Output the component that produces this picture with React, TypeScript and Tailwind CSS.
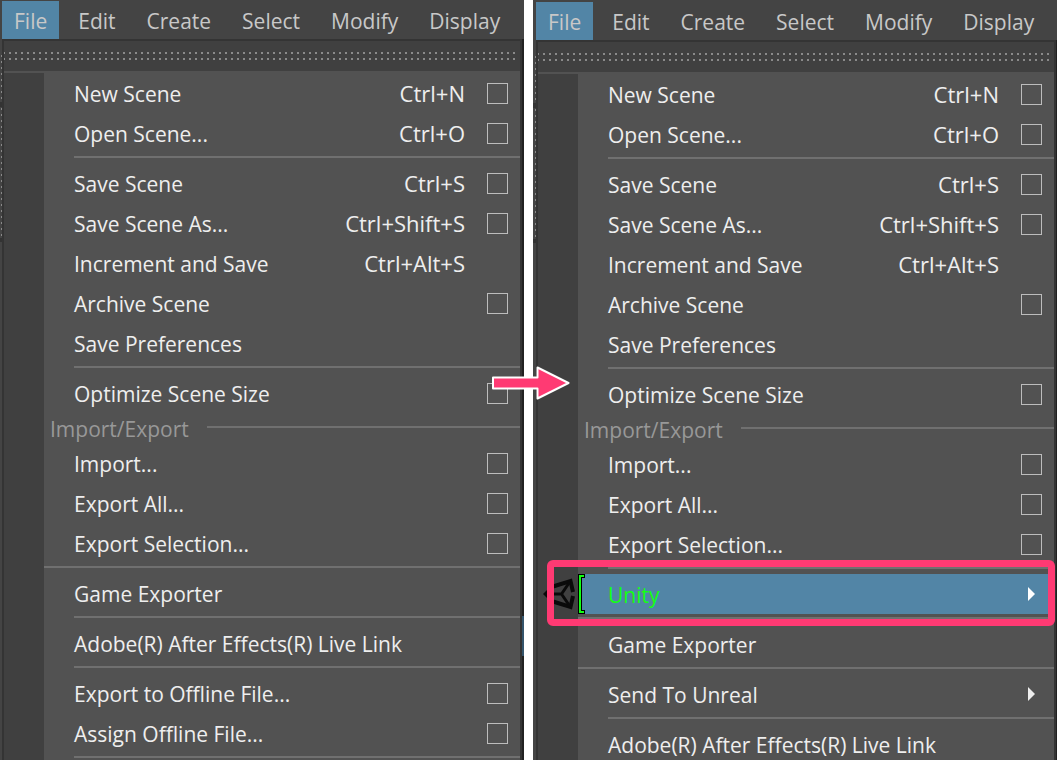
import React, { useId } from 'react';

type Entry =
  | { kind: 'item'; label: string; shortcut?: string; options?: boolean; submenu?: boolean; active?: boolean }
  | { kind: 'separator'; full?: boolean }
  | { kind: 'section'; label: string };

const menuBar = ['File', 'Edit', 'Create', 'Select', 'Modify', 'Display'];

const commonEntries: Entry[] = [
  { kind: 'item', label: 'New Scene', shortcut: 'Ctrl+N', options: true },
  { kind: 'item', label: 'Open Scene...', shortcut: 'Ctrl+O', options: true },
  { kind: 'separator' },
  { kind: 'item', label: 'Save Scene', shortcut: 'Ctrl+S', options: true },
  { kind: 'item', label: 'Save Scene As...', shortcut: 'Ctrl+Shift+S', options: true },
  { kind: 'item', label: 'Increment and Save', shortcut: 'Ctrl+Alt+S' },
  { kind: 'item', label: 'Archive Scene', options: true },
  { kind: 'item', label: 'Save Preferences' },
  { kind: 'separator' },
  { kind: 'item', label: 'Optimize Scene Size', options: true },
  { kind: 'section', label: 'Import/Export' },
  { kind: 'item', label: 'Import...', options: true },
  { kind: 'item', label: 'Export All...', options: true },
  { kind: 'item', label: 'Export Selection...', options: true },
];

const beforeEntries: Entry[] = [
  ...commonEntries,
  { kind: 'separator', full: true },
  { kind: 'item', label: 'Game Exporter' },
  { kind: 'separator' },
  { kind: 'item', label: 'Adobe(R) After Effects(R) Live Link' },
  { kind: 'separator' },
  { kind: 'item', label: 'Export to Offline File...', options: true },
  { kind: 'item', label: 'Assign Offline File...', options: true },
  { kind: 'separator' },
];

const afterEntries: Entry[] = [
  ...commonEntries,
  { kind: 'separator' },
  { kind: 'item', label: 'Unity', submenu: true, active: true },
  { kind: 'separator', full: true },
  { kind: 'item', label: 'Game Exporter' },
  { kind: 'separator', full: true },
  { kind: 'item', label: 'Send To Unreal', submenu: true },
  { kind: 'separator' },
  { kind: 'item', label: 'Adobe(R) After Effects(R) Live Link' },
];

const UnityLogo: React.FC = () => (
  <svg className="absolute left-[5px] top-[3px] h-[34px] w-8" viewBox="0 0 32 34" fill="none" stroke="#0a0a0a" strokeWidth="3">
    <path d="M10 9.500L27.500 4L30 15M30 19L27.500 30L10 24.500" strokeWidth="4" />
    <path d="M3 17H18.500L27 4.500M18.500 17L27 29.500" />
    <path d="M0 17L7 10V24Z" fill="#0a0a0a" stroke="none" />
  </svg>
);

const MenuItem: React.FC<{ entry: Extract<Entry, { kind: 'item' }> }> = ({ entry }) => {
  const id = useId();

  return (
    <li className="relative flex h-10 items-center pl-10">
      {entry.active && <UnityLogo />}
      <div className={`relative flex h-full flex-1 items-center pr-3 pl-[30px] ${entry.active ? 'bg-[#5285a6] text-[#14ff14]' : ''}`}>
        {entry.active && (
          <svg className="absolute top-0 left-0 h-10 w-[7px]" viewBox="0 0 7 40">
            <path d="M0 0H7V4H4V36H7V40H0Z" fill="#000" />
            <path d="M1 1H6V3H3V37H6V39H1Z" fill="#14ff14" />
          </svg>
        )}
        <button type="button" id={id} className="flex flex-1 items-center justify-between text-left whitespace-nowrap">
          <span className="pt-0.5">{entry.label}</span>
          {entry.shortcut && <span className="text-[22px]">{entry.shortcut}</span>}
        </button>
        <div className="flex w-[43px] justify-end">
          {entry.options && (
            <input type="checkbox" aria-labelledby={id} className="h-[21px] w-[21px] appearance-none border border-[#bdbdbd]" />
          )}
          {entry.submenu && (
            <svg className="mr-[7px] h-[14px] w-[7px]" viewBox="0 0 7 14" fill={entry.active ? '#fff' : '#eee'}>
              <path d="M0 0L7 7L0 14Z" />
            </svg>
          )}
        </div>
      </div>
      {entry.active && (
        <div className="absolute -top-[14px] -right-px left-[9px] h-[66px] rounded-md border-[7px] border-[#ff3a73]" />
      )}
    </li>
  );
};

const MenuEntry: React.FC<{ entry: Entry }> = ({ entry }) => {
  if (entry.kind === 'separator') {
    return (
      <li className={`h-[10px] pt-[3px] ${entry.full ? 'pl-10' : 'pl-[70px]'}`}>
        <div className="h-0.5 bg-[#707070]" />
      </li>
    );
  }
  if (entry.kind === 'section') {
    return (
      <li className="flex h-[30px] items-center gap-[18px] pl-[46px] text-[#989898]">
        <span className="pt-0.5">{entry.label}</span>
        <div className="mb-0.5 h-0.5 flex-1 bg-[#707070]" />
      </li>
    );
  }
  return <MenuItem entry={entry} />;
};

interface MenuWindowProps {
  entries: Entry[];
  shifted?: boolean;
}

const MenuWindow: React.FC<MenuWindowProps> = ({ entries, shifted }) => (
  <section className={`flex min-w-0 flex-1 flex-col bg-[#444444] ${shifted ? 'pt-0.5' : 'pt-px'}`}>
    <nav className={`flex h-[38px] shrink-0 gap-[7px] text-[#c8c8c8] ${shifted ? 'pl-[3px]' : 'pl-0.5'}`}>
      {menuBar.map((name) => (
        <button key={name} type="button" className={`px-3 pt-0.5 ${name === 'File' ? 'bg-[#5285a6]' : ''}`}>
          {name}
        </button>
      ))}
    </nav>
    <div className="flex flex-1">
      {/* docked toolbar handle peeking out behind the menu */}
      <div className={`flex flex-col items-end pt-4 ${shifted ? 'w-[3px]' : 'w-0.5'}`}>
        <div className="h-[47px] w-px bg-[repeating-linear-gradient(to_bottom,#8a8a8a_0_2px,transparent_2px_6px)]" />
        <div className="h-[5px] w-full bg-[#333333]" />
        <div className="h-[131px] w-px bg-[repeating-linear-gradient(to_bottom,transparent_0_1px,#8a8a8a_1px_3px,transparent_3px_6px)]" />
        <div className="h-1 w-full bg-[#333333]" />
      </div>
      <div className="flex-1 border-x-2 border-t-2 border-[#343434] bg-[#525252]">
        <div className="flex h-[30px] flex-col gap-1 bg-[#404040] pt-[11px] pr-1">
          <div className="h-0.5 bg-[repeating-linear-gradient(to_right,#8a8a8a_0_1px,transparent_1px_5px,#8a8a8a_5px_6px)]" />
          <div className="h-0.5 bg-[repeating-linear-gradient(to_right,#8a8a8a_0_1px,transparent_1px_5px,#8a8a8a_5px_6px)]" />
        </div>
        <div className="h-0.5" />
        <ul className="min-h-full bg-[linear-gradient(to_right,#404040_40px,transparent_40px)] text-[#eeeeee]">
          {entries.map((entry, i) => (
            <MenuEntry key={i} entry={entry} />
          ))}
        </ul>
      </div>
      <div className={`flex flex-col bg-[#212121] ${shifted ? 'w-px' : 'w-0.5'}`}>
        <div className="h-[577px]" />
        {!shifted && <div className="h-10 bg-[#34546b]" />}
      </div>
    </div>
  </section>
);

const Arrow: React.FC = () => (
  <svg className="absolute top-[364px] -left-[34px] z-10 h-[38px] w-[82px]" viewBox="0 0 82 38">
    <path
      d="M3 13.500H47.500V3.500L78.500 19L47.500 34.500V24.500H3Z"
      fill="#ff3a73"
      stroke="#fff"
      strokeWidth="2"
      strokeLinejoin="round"
    />
  </svg>
);

export default function App() {
  return (
    <main className="flex h-screen overflow-hidden bg-white font-['Open_Sans',sans-serif] text-[21px] leading-[30px]">
      <MenuWindow entries={beforeEntries} />
      <div className="relative w-[9px] shrink-0">
        <Arrow />
      </div>
      <MenuWindow entries={afterEntries} shifted />
    </main>
  );
}
